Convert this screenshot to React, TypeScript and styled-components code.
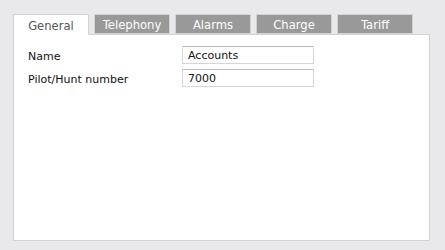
import React, { useState } from "react";
import styled, { createGlobalStyle } from "styled-components";

const GlobalStyle = createGlobalStyle`
  html, body {
    margin: 0;
    padding: 0;
    background: #e9e9eb;
  }
  body {
    font-family: "DejaVu Sans", Verdana, sans-serif;
  }
`;

const Page = styled.div`
  width: 445px;
  height: 250px;
  box-sizing: border-box;
  padding: 14px 15px 9px 13px;
  display: flex;
  flex-direction: column;
`;

const TabBar = styled.div`
  display: flex;
  gap: 5px;
  height: 20px;
  position: relative;
  z-index: 1;
`;

const Tab = styled.button<{ $active?: boolean }>`
  width: 76px;
  height: ${(p) => (p.$active ? "21px" : "20px")};
  box-sizing: border-box;
  margin: 0;
  padding: 2px 0 0;
  border: 1px solid #d2d2d4;
  border-bottom: ${(p) => (p.$active ? "none" : "1px solid #d2d2d4")};
  background: ${(p) => (p.$active ? "#ffffff" : "#999999")};
  color: ${(p) => (p.$active ? "#555555" : "#ffffff")};
  font-family: "DejaVu Sans", Verdana, sans-serif;
  font-size: 11.6px;
  line-height: 16px;
  text-align: center;
  cursor: pointer;
`;

const Panel = styled.div`
  flex: 1;
  background: #ffffff;
  border: 1px solid #d2d2d4;
  padding: 11px 14px;
  display: grid;
  grid-template-columns: 154px 132px;
  grid-auto-rows: 18px;
  row-gap: 5px;
  align-content: start;
`;

const Label = styled.label`
  font-size: 11px;
  color: #111111;
  line-height: 19px;
  padding-top: 1px;
`;

const Field = styled.input`
  width: 132px;
  height: 18px;
  box-sizing: border-box;
  border: 1px solid #d6d6da;
  border-top-color: #b9b9bd;
  padding: 1px 5px 0;
  font-family: "DejaVu Sans", Verdana, sans-serif;
  font-size: 11px;
  color: #111111;
  outline: none;
`;

const tabs = ["General", "Telephony", "Alarms", "Charge", "Tariff"];

const App: React.FC = () => {
  const [active, setActive] = useState<string>("General");
  const [name, setName] = useState<string>("Accounts");
  const [pilot, setPilot] = useState<string>("7000");

  return (
    <Page>
      <GlobalStyle />
      <TabBar>
        {tabs.map((t) => (
          <Tab key={t} $active={t === active} onClick={() => setActive(t)}>
            {t}
          </Tab>
        ))}
      </TabBar>
      <Panel>
        <Label>Name</Label>
        <Field value={name} onChange={(e) => setName(e.target.value)} />
        <Label>Pilot/Hunt number</Label>
        <Field value={pilot} onChange={(e) => setPilot(e.target.value)} />
      </Panel>
    </Page>
  );
};

export default App;
